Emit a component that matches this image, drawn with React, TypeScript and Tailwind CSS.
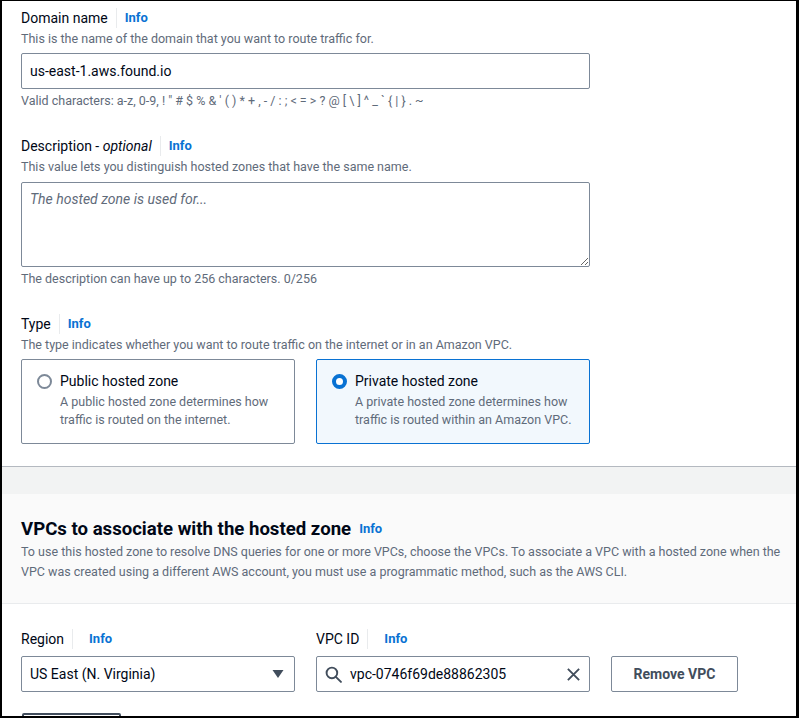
import { useState } from 'react';

const font = { fontFamily: 'Roboto, "Noto Sans", Arial, sans-serif' };

function Info() {
  return <span className="text-[13px] font-bold text-[#0972d3]">Info</span>;
}

function FieldLabel({ children, wide }: { children: React.ReactNode; wide?: boolean }) {
  return (
    <div className="flex items-center h-5 text-[14px] leading-5 text-[#000716]">
      <span>{children}</span>
      <span className={`h-5 w-px bg-[#e9ebed] ml-2 ${wide ? 'mr-4' : 'mr-2'}`} />
      <Info />
    </div>
  );
}

function Hint({ children, className = '' }: { children: React.ReactNode; className?: string }) {
  return <div className={`text-[12.5px] leading-[18px] text-[#5f6b7a] ${className}`}>{children}</div>;
}

function Radio({ checked }: { checked: boolean }) {
  return checked ? (
    <span className="w-[15px] h-[15px] rounded-full border-[4.5px] border-[#0972d3] bg-white shrink-0" />
  ) : (
    <span className="w-[15px] h-[15px] rounded-full border-2 border-[#7d8998] bg-white shrink-0" />
  );
}

function ZoneCard({
  title,
  text,
  checked,
  onClick,
}: {
  title: string;
  text: string[];
  checked: boolean;
  onClick: () => void;
}) {
  return (
    <div
      onClick={onClick}
      className={`w-[274px] h-[85px] rounded-[2px] border pt-[11px] pl-[15px] ${
        checked ? 'border-[#0972d3] bg-[#f2f8fd]' : 'border-[#7d8998] bg-white'
      }`}
    >
      <div className="flex items-center gap-[8px] h-5">
        <Radio checked={checked} />
        <span className="text-[14px] leading-5 text-[#000716]">{title}</span>
      </div>
      <div className="pl-[23px] mt-[2px]">
        {text.map((t) => (
          <Hint key={t}>{t}</Hint>
        ))}
      </div>
    </div>
  );
}

export default function App() {
  const [type, setType] = useState<'public' | 'private'>('private');

  return (
    <div
      className="w-[799px] h-[718px] overflow-hidden bg-white border-black border-t border-l-2 border-r-[3px] border-b-2"
      style={font}
    >
      {/* Hosted zone configuration */}
      <div className="pl-[19px] pt-[7px]">
        <FieldLabel>Domain name</FieldLabel>
        <Hint className="mt-[2px]">This is the name of the domain that you want to route traffic for.</Hint>
        <div className="mt-[5px] w-[569px] h-[36px] rounded-[2px] border border-[#7d8998] px-[8px] flex items-center text-[14px] text-[#000716]">
          us-east-1.aws.found.io
        </div>
        <Hint className="mt-[3px]">
          Valid characters: a-z, 0-9, ! " # $ % &amp; ' ( ) * + , - / : ; &lt; = &gt; ? @ [ \ ] ^ _ ` {'{'} | {'}'} . ~
        </Hint>

        <div className="mt-[26px]">
          <FieldLabel>
            Description - <i>optional</i>
          </FieldLabel>
        </div>
        <Hint className="mt-[2px]">This value lets you distinguish hosted zones that have the same name.</Hint>
        <textarea
          className="mt-[6px] block w-[569px] h-[85px] rounded-[2px] border border-[#7d8998] px-[8px] py-[6px] text-[14px] leading-5 text-[#000716] placeholder:italic placeholder:text-[#5f6b7a] outline-none resize-y"
          placeholder="The hosted zone is used for..."
        />
        <Hint className="mt-[3px]">The description can have up to 256 characters. 0/256</Hint>

        <div className="mt-[26px]">
          <FieldLabel>Type</FieldLabel>
        </div>
        <Hint className="mt-[2px]">
          The type indicates whether you want to route traffic on the internet or in an Amazon VPC.
        </Hint>
        <div className="mt-[5px] flex gap-[21px]">
          <ZoneCard
            title="Public hosted zone"
            text={['A public hosted zone determines how', 'traffic is routed on the internet.']}
            checked={type === 'public'}
            onClick={() => setType('public')}
          />
          <ZoneCard
            title="Private hosted zone"
            text={['A private hosted zone determines how', 'traffic is routed within an Amazon VPC.']}
            checked={type === 'private'}
            onClick={() => setType('private')}
          />
        </div>
      </div>

      {/* Section gap */}
      <div className="mt-[22px] border-t border-[#b4b9c0] h-[28px] bg-[#f2f3f3]" />

      {/* VPC header */}
      <div className="bg-[#fafafa] border-b border-[#e9ebed] pl-[19px] pt-[23px] pb-[21px]">
        <div className="flex items-center gap-[8px] h-6">
          <span className="text-[18.6px] leading-6 font-bold text-[#000716]">
            VPCs to associate with the hosted zone
          </span>
          <Info />
        </div>
        <div className="mt-px text-[12.5px] leading-5 text-[#5f6b7a] w-[768px]">
          To use this hosted zone to resolve DNS queries for one or more VPCs, choose the VPCs. To associate a VPC
          with a hosted zone when the VPC was created using a different AWS account, you must use a programmatic
          method, such as the AWS CLI.
        </div>
      </div>

      {/* VPC row */}
      <div className="pl-[19px] pt-[25px]">
        <div className="flex gap-[21px] items-end">
          <div className="w-[274px]">
            <FieldLabel wide>Region</FieldLabel>
            <div className="mt-[7px] h-[36px] rounded-[2px] border border-[#7d8998] pl-[8px] pr-[10px] flex items-center justify-between text-[14px] text-[#000716]">
              <span>US East (N. Virginia)</span>
              <svg width="12" height="10" viewBox="0 0 12 10">
                <path d="M0.5 1 L11.5 1 L6 9 Z" fill="#414d5c" />
              </svg>
            </div>
          </div>
          <div className="w-[274px]">
            <FieldLabel wide>VPC ID</FieldLabel>
            <div className="mt-[7px] h-[36px] rounded-[2px] border border-[#7d8998] pl-[8px] pr-[8px] flex items-center text-[14px] text-[#000716]">
              <svg width="17" height="17" viewBox="0 0 16 16" fill="none" stroke="#414d5c" strokeWidth="1.8">
                <circle cx="6.5" cy="6.5" r="5" />
                <path d="M10.2 10.2 L15 15" strokeLinecap="round" />
              </svg>
              <span className="ml-[8px] flex-1">vpc-0746f69de88862305</span>
              <svg width="15" height="15" viewBox="0 0 16 16" fill="none" stroke="#414d5c" strokeWidth="2">
                <path d="M2 2 L14 14 M14 2 L2 14" />
              </svg>
            </div>
          </div>
          <button className="w-[127px] h-[36px] rounded-[2px] border border-[#7d8998] bg-white text-[14px] font-bold text-[#414d5c]">
            Remove VPC
          </button>
        </div>
        <button className="mt-[21px] ml-px w-[99px] h-[32px] rounded-[2px] border-2 border-[#414d5c] bg-white" />
      </div>
    </div>
  );
}
